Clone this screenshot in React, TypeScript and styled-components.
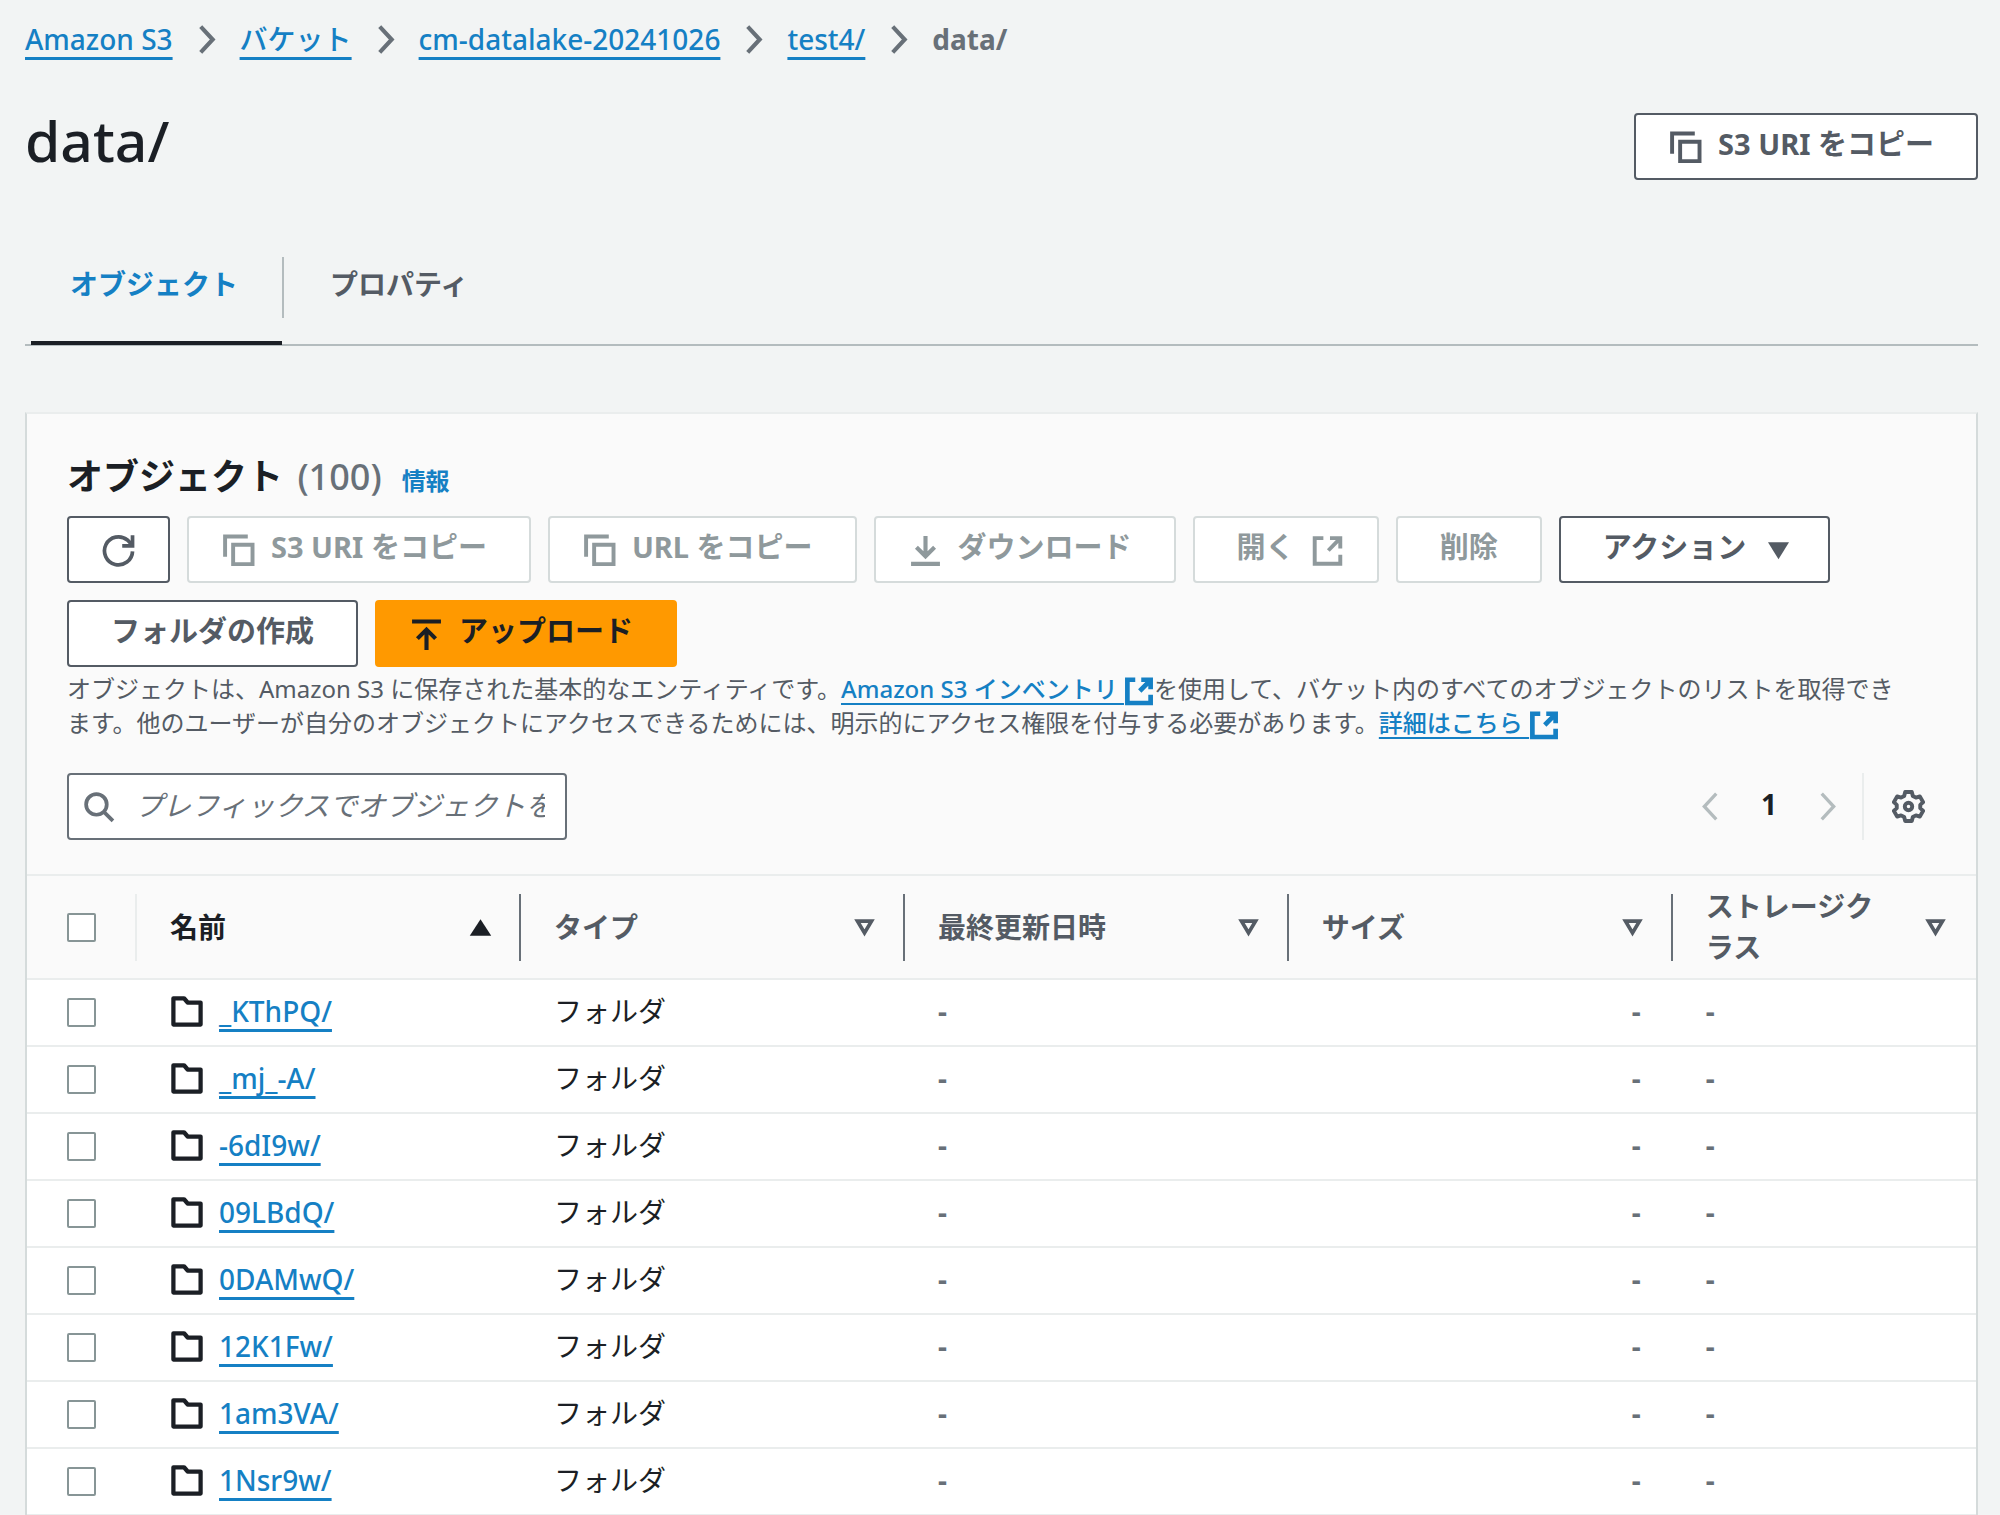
import React from "react";
import styled, { createGlobalStyle, css } from "styled-components";

const color = {
  page: "#f2f4f4",
  panel: "#fafafa",
  ink: "#1b1f25",
  text: "#545b64",
  muted: "#687078",
  link: "#1580c4",
  disabled: "#8f999c",
  line: "#eaeded",
  edge: "#d5dbdb",
  rule: "#b4bcbe",
  box: "#879596",
  orange: "#ff9900",
};

const GlobalStyle = createGlobalStyle`
  * { box-sizing: border-box; }
  body {
    margin: 0;
    background: ${color.page};
    color: ${color.ink};
    font-family: "Noto Sans", "Noto Sans CJK JP", sans-serif;
    font-size: 28px;
    line-height: 42px;
  }
  button, input { font: inherit; color: inherit; }
  svg { display: block; flex: none; }
`;

const Page = styled.main`
  padding: 18px 22px 0 25px;
`;

const Link = styled.a<{ $small?: boolean }>`
  color: ${color.link};
  font-weight: 500;
  text-decoration: underline;
  text-decoration-thickness: ${(p) => (p.$small ? "2px" : "3px")};
  text-underline-offset: ${(p) => (p.$small ? "5px" : "7px")};
  text-decoration-skip-ink: none;
`;

const Crumbs = styled.ol`
  display: flex;
  align-items: center;
  margin: 0;
  padding: 0;
  list-style: none;
`;

const Crumb = styled.li`
  display: flex;
  align-items: center;
  color: ${color.muted};

  & > svg {
    margin: 0 17px;
  }
`;

const TitleRow = styled.header`
  display: flex;
  align-items: flex-start;
  justify-content: space-between;
  margin-top: 53px;
`;

const Title = styled.h1`
  margin: 0;
  font-size: 57px;
  line-height: 54px;
  font-weight: 500;
`;

const Button = styled.button<{ $primary?: boolean }>`
  display: flex;
  align-items: center;
  gap: 16px;
  height: 67px;
  padding: 0 42px 6px;
  border: 2px solid ${color.text};
  border-radius: 4px;
  background: #fff;
  color: ${color.text};
  font-size: 29px;
  font-weight: 700;
  white-space: nowrap;

  & > svg {
    margin-top: 7px;
  }
  & > svg:first-child {
    margin-left: -9px;
  }
  & > svg:last-child {
    margin-right: -9px;
  }

  &:disabled {
    border-color: ${color.edge};
    color: ${color.disabled};
  }

  ${(p) =>
    p.$primary &&
    css`
      border-color: ${color.orange};
      background: ${color.orange};
      color: ${color.ink};
    `}
`;

const IconButton = styled(Button)`
  justify-content: center;
  width: 103px;
  padding: 0 0 6px;

  & > svg:first-child {
    margin: 7px 0 0;
  }
`;

const Tabs = styled.nav`
  display: flex;
  margin-top: 77px;
  border-bottom: 2px solid ${color.rule};
`;

const Tab = styled.button<{ $active?: boolean }>`
  display: flex;
  margin: 0 0 -1px;
  padding: 0;
  border: 0;
  border-bottom: 4px solid ${(p) => (p.$active ? color.ink : "transparent")};
  background: none;
  color: ${(p) => (p.$active ? color.link : color.text)};
  font-weight: 700;

  & > span {
    margin-bottom: 23px;
    padding: 6px 46px 13px;
  }
  &:first-child {
    margin-left: 6px;
  }
  &:first-child > span {
    padding-left: 39px;
    padding-right: 44px;
  }
  &:not(:first-child) > span {
    border-left: 2px solid ${color.rule};
  }
`;

const Panel = styled.section`
  margin-top: 66px;
  border: 2px solid ${color.edge};
  border-top-color: ${color.line};
  border-bottom: 0;
  background: ${color.panel};
`;

const PanelHead = styled.div`
  padding: 36px 40px 34px;
`;

const Heading = styled.div`
  display: flex;
  align-items: baseline;
  gap: 20px;
  line-height: 54px;
`;

const PanelTitle = styled.h2`
  margin: 0;
  font-size: 36px;
  font-weight: 700;
`;

const Count = styled.span`
  margin-left: 5px;
  color: ${color.muted};
  font-weight: 500;
`;

const Info = styled.a`
  color: ${color.link};
  font-size: 24px;
  font-weight: 700;
  text-decoration: none;
`;

const Toolbar = styled.div`
  display: flex;
  flex-wrap: wrap;
  gap: 17px;
  margin-top: 8px;
`;

const Description = styled.p`
  margin: 5px 0 0;
  padding-right: 24px;
  color: ${color.text};
  font-size: 24px;
  line-height: 33px;

  & svg {
    display: inline-block;
    vertical-align: -8px;
  }
`;

const FilterRow = styled.div`
  display: flex;
  align-items: center;
  justify-content: space-between;
  margin-top: 33px;
`;

const Search = styled.label`
  display: flex;
  align-items: center;
  gap: 20px;
  width: 500px;
  height: 67px;
  padding: 0 20px 0 13px;
  border: 2px solid ${color.muted};
  border-radius: 4px;
  background: #fff;
  color: ${color.muted};

  & > input {
    flex: 1;
    min-width: 0;
    height: 46px;
    padding: 0 0 4px;
    border: 0;
    outline: 0;
    background: none;
  }
  & > input::placeholder {
    color: ${color.muted};
    font-style: italic;
    opacity: 1;
  }
`;

const Pager = styled.div`
  display: flex;
  align-items: center;
  margin-right: 11px;
  color: ${color.text};
`;

const PagerButton = styled.button<{ $current?: boolean }>`
  display: flex;
  justify-content: center;
  padding: ${(p) => (p.$current ? "0 0 6px" : "0")};
  width: ${(p) => (p.$current ? "84px" : "33px")};
  border: 0;
  background: none;
  font-weight: 700;
  color: ${(p) => (p.$current ? color.ink : "inherit")};

  &:disabled {
    color: ${color.rule};
  }
`;

const PagerDivider = styled.span`
  width: 2px;
  height: 67px;
  margin: 0 28px 0 18px;
  background: ${color.line};
`;

const Table = styled.table`
  width: 100%;
  table-layout: fixed;
  border-collapse: separate;
  border-spacing: 0;
  border-top: 2px solid ${color.line};
`;

const CheckCol = styled.col`
  width: 110px;
`;

const DataCol = styled.col`
  width: 19.7%;
`;

const HeadCell = styled.th<{ $sorted?: boolean }>`
  height: 104px;
  padding: 0;
  border-bottom: 2px solid ${color.line};
  color: ${(p) => (p.$sorted ? color.ink : color.text)};
  font-weight: 700;
  text-align: left;
`;

const HeadInner = styled.div<{ $divider?: string }>`
  display: flex;
  align-items: center;
  justify-content: space-between;
  gap: 20px;
  height: 67px;
  padding: 0 22px 0 33px;
  border-right: 2px solid ${(p) => p.$divider || "transparent"};
  line-height: 41px;

  & > button {
    flex: none;
    padding: 0;
    border: 0;
    background: none;
  }
`;

const CheckHead = styled(HeadInner)`
  padding: 0 0 0 40px;
`;

const Checkbox = styled.input`
  display: block;
  appearance: none;
  width: 29px;
  height: 29px;
  margin: 0;
  border: 2px solid ${color.box};
  border-radius: 2px;
  background: #fff;
`;

const Row = styled.tr`
  background: #fff;
`;

const Cell = styled.td<{ $right?: boolean; $muted?: boolean }>`
  height: 67px;
  padding: 0 32px 4px 33px;
  border-bottom: 2px solid ${color.line};
  text-align: ${(p) => (p.$right ? "right" : "left")};
  color: ${(p) => (p.$muted ? color.muted : color.ink)};
  font-weight: ${(p) => (p.$muted ? 700 : 400)};
`;

const CheckCell = styled(Cell)`
  padding: 0 0 0 40px;
`;

const NameCell = styled.div`
  display: flex;
  align-items: center;
  gap: 15px;
`;

const svgProps = (w: number, h = w, box = 16) => ({
  width: w,
  height: h,
  viewBox: `0 0 ${box} ${box}`,
  fill: "none",
  stroke: "currentColor",
  strokeWidth: 2,
  "aria-hidden": true,
});

const Chevron = ({ left, thin }: { left?: boolean; thin?: boolean }) => (
  <svg {...svgProps(33)} strokeWidth={thin ? 1.6 : 2}>
    <path d={left ? "M10.8 1.8 5 8l5.8 6.2" : "M5.2 1.8 11 8l-5.8 6.2"} />
  </svg>
);
const CopyIcon = () => (
  <svg {...svgProps(33)} strokeWidth={1.9}>
    <path d="M1.5 11V1.2h11" />
    <path d="M5.4 5.2h9.4v9.4H5.4z" />
  </svg>
);
const RefreshIcon = () => (
  <svg {...svgProps(33)} strokeWidth={1.8}>
    <path d="M14.8 8.4A6.8 6.8 0 1 1 12.3 2.9L14 4.6" />
    <path d="M14.8 0.6v5.2H9.8" />
    <path d="M14.8 2.8v3h-3z" fill="currentColor" stroke="none" />
  </svg>
);
const DownloadIcon = () => (
  <svg {...svgProps(33)}>
    <path d="M1 14.5h14M8 1v9.5M3.6 6.4 8 10.8l4.4-4.4" />
  </svg>
);
const UploadIcon = () => (
  <svg {...svgProps(33)}>
    <path d="M1 1.7h14M8 15.5V5.8M3.6 10 8 5.6l4.4 4.4" />
  </svg>
);
const ExternalIcon = ({ bold }: { bold?: boolean }) => (
  <svg {...svgProps(bold ? 30 : 33)} strokeWidth={bold ? 2.5 : 1.9}>
    <path d="M6 2H1.8v12.4h12.4V10" />
    <path d="M9.2 2h5v5M14 2.3 8.4 8" />
  </svg>
);
const SearchIcon = () => (
  <svg {...svgProps(33)} strokeWidth={1.8}>
    <circle cx="7" cy="7" r="5" />
    <path d="m10.6 10.6 4.4 4.4" />
  </svg>
);
const GearIcon = () => (
  <svg {...svgProps(33)} strokeWidth={1.9} strokeLinejoin="round">
    <path d="M6.4 1h3.2l.5 1.9 1.5.8 1.9-.6 1.6 2.8-1.4 1.3v1.6l1.4 1.3-1.6 2.8-1.9-.6-1.5.8-.5 1.9H6.4l-.5-1.9-1.5-.8-1.9.6L.9 10.1l1.4-1.3V7.2L.9 5.9l1.6-2.8 1.9.6 1.5-.8z" />
    <circle cx="8" cy="8" r="1.8" />
  </svg>
);
const FolderIcon = () => (
  <svg {...svgProps(34)}>
    <path d="M1.6 2h5l1.7 2h6.1v10.4H1.6z" strokeLinejoin="round" />
  </svg>
);
const CaretDown = () => (
  <svg {...svgProps(33)}>
    <path d="M2.9 4h10.2L8 12.2z" fill="currentColor" stroke="none" />
  </svg>
);
const SortIcon = ({ sorted }: { sorted?: boolean }) => (
  <svg {...svgProps(33)} strokeWidth={1.8}>
    {sorted ? (
      <path d="M2.8 12 8 4l5.2 8z" fill="currentColor" stroke="none" />
    ) : (
      <path d="M4.6 4.9h6.8L8 10.6z" />
    )}
  </svg>
);

const trail = ["Amazon S3", "バケット", "cm-datalake-20241026", "test4/"];
const columns = ["名前", "タイプ", "最終更新日時", "サイズ", "ストレージクラス"];
const folders = ["_KThPQ/", "_mj_-A/", "-6dI9w/", "09LBdQ/", "0DAMwQ/", "12K1Fw/", "1am3VA/", "1Nsr9w/"];

export default function App() {
  return (
    <Page lang="ja">
      <GlobalStyle />
      <nav aria-label="パンくずリスト">
        <Crumbs>
          {trail.map((name) => (
            <Crumb key={name}>
              <Link href="#">{name}</Link>
              <Chevron />
            </Crumb>
          ))}
          <Crumb aria-current="page">
            <strong>data/</strong>
          </Crumb>
        </Crumbs>
      </nav>

      <TitleRow>
        <Title>data/</Title>
        <Button>
          <CopyIcon />
          <span>S3 URI をコピー</span>
        </Button>
      </TitleRow>

      <Tabs>
        <Tab $active>
          <span>オブジェクト</span>
        </Tab>
        <Tab>
          <span>プロパティ</span>
        </Tab>
      </Tabs>

      <Panel>
        <PanelHead>
          <Heading>
            <PanelTitle>
              オブジェクト <Count>(100)</Count>
            </PanelTitle>
            <Info href="#">情報</Info>
          </Heading>
          <Toolbar>
            <IconButton aria-label="更新">
              <RefreshIcon />
            </IconButton>
            <Button disabled>
              <CopyIcon />
              <span>S3 URI をコピー</span>
            </Button>
            <Button disabled>
              <CopyIcon />
              <span>URL をコピー</span>
            </Button>
            <Button disabled>
              <DownloadIcon />
              <span>ダウンロード</span>
            </Button>
            <Button disabled>
              <span>開く</span>
              <ExternalIcon />
            </Button>
            <Button disabled>削除</Button>
            <Button>
              <span>アクション</span>
              <CaretDown />
            </Button>
            <Button>フォルダの作成</Button>
            <Button $primary>
              <UploadIcon />
              <span>アップロード</span>
            </Button>
          </Toolbar>
          <Description>
            オブジェクトは、Amazon S3 に保存された基本的なエンティティです。
            <Link href="#" $small>
              Amazon S3 インベントリ <ExternalIcon bold />
            </Link>
            を使用して、バケット内のすべてのオブジェクトのリストを取得できます。他のユーザーが自分のオブジェクトにアクセスできるためには、明示的にアクセス権限を付与する必要があります。
            <Link href="#" $small>
              詳細はこちら <ExternalIcon bold />
            </Link>
          </Description>
          <FilterRow>
            <Search>
              <SearchIcon />
              <input
                type="text"
                aria-label="オブジェクトを検索"
                placeholder="プレフィックスでオブジェクトを検索"
              />
            </Search>
            <Pager>
              <PagerButton disabled aria-label="前のページ">
                <Chevron left thin />
              </PagerButton>
              <PagerButton $current>1</PagerButton>
              <PagerButton disabled aria-label="次のページ">
                <Chevron thin />
              </PagerButton>
              <PagerDivider />
              <PagerButton aria-label="設定">
                <GearIcon />
              </PagerButton>
            </Pager>
          </FilterRow>
        </PanelHead>

        <Table>
          <colgroup>
            <CheckCol />
            <DataCol />
            <DataCol />
            <DataCol />
            <DataCol />
            <col />
          </colgroup>
          <thead>
            <tr>
              <HeadCell>
                <CheckHead $divider={color.line}>
                  <Checkbox type="checkbox" aria-label="すべて選択" />
                </CheckHead>
              </HeadCell>
              {columns.map((name, i) => (
                <HeadCell key={name} $sorted={i === 0}>
                  <HeadInner $divider={i < columns.length - 1 ? color.muted : undefined}>
                    <span>{name}</span>
                    <button aria-label={`${name}で並べ替え`}>
                      <SortIcon sorted={i === 0} />
                    </button>
                  </HeadInner>
                </HeadCell>
              ))}
            </tr>
          </thead>
          <tbody>
            {folders.map((name) => (
              <Row key={name}>
                <CheckCell>
                  <Checkbox type="checkbox" aria-label={name} />
                </CheckCell>
                <Cell>
                  <NameCell>
                    <FolderIcon />
                    <Link href="#">{name}</Link>
                  </NameCell>
                </Cell>
                <Cell>フォルダ</Cell>
                <Cell $muted>-</Cell>
                <Cell $muted $right>
                  -
                </Cell>
                <Cell $muted>-</Cell>
              </Row>
            ))}
          </tbody>
        </Table>
      </Panel>
    </Page>
  );
}
